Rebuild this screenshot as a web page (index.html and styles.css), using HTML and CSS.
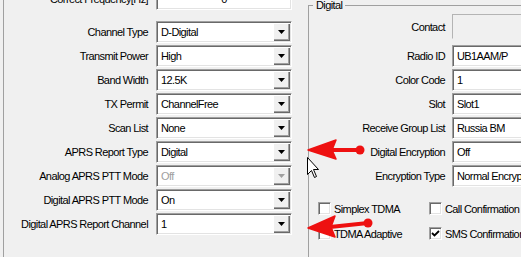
FILE: index.html
```html
<!DOCTYPE html>
<html lang="en">

<head>
  <meta charset="UTF-8" />
  <title>Channel - Digital</title>
  <link rel="stylesheet" href="styles.css">
</head>

<body>
  <div class="form">
    <section class="channel">
      <div class="row freq">
        <label>Correct Frequency[Hz]</label>
        <div class="field center">0</div>
      </div>

      <div class="rows">
        <div class="row"><label>Channel Type</label>
          <div class="combo"><span class="value">D-Digital</span><span class="drop"></span></div>
        </div>
        <div class="row"><label>Transmit Power</label>
          <div class="combo"><span class="value">High</span><span class="drop"></span></div>
        </div>
        <div class="row"><label>Band Width</label>
          <div class="combo"><span class="value">12.5K</span><span class="drop"></span></div>
        </div>
        <div class="row"><label>TX Permit</label>
          <div class="combo"><span class="value">ChannelFree</span><span class="drop"></span></div>
        </div>
        <div class="row"><label>Scan List</label>
          <div class="combo"><span class="value">None</span><span class="drop"></span></div>
        </div>
        <div class="row"><label>APRS Report Type</label>
          <div class="combo"><span class="value">Digital</span><span class="drop"></span></div>
        </div>
        <div class="row"><label>Analog APRS PTT Mode</label>
          <div class="combo disabled"><span class="value">Off</span><span class="drop"></span></div>
        </div>
        <div class="row"><label>Digital APRS PTT Mode</label>
          <div class="combo"><span class="value">On</span><span class="drop"></span></div>
        </div>
        <div class="row"><label>Digital APRS Report Channel</label>
          <div class="combo"><span class="value">1</span><span class="drop"></span></div>
        </div>
      </div>
    </section>

    <fieldset class="digital">
      <legend>Digital</legend>

      <div class="drows">
        <div class="drow contact"><label>Contact</label>
          <div class="field off"></div>
        </div>
        <div class="drow first"><label>Radio ID</label>
          <div class="field">UB1AAM/P</div>
        </div>
        <div class="drow"><label>Color Code</label>
          <div class="field">1</div>
        </div>
        <div class="drow"><label>Slot</label>
          <div class="field">Slot1</div>
        </div>
        <div class="drow"><label>Receive Group List</label>
          <div class="field">Russia BM</div>
        </div>
        <div class="drow"><label>Digital Encryption</label>
          <div class="field">Off</div>
        </div>
        <div class="drow"><label>Encryption Type</label>
          <div class="field">Normal Encryption</div>
        </div>
      </div>

      <div class="checks">
        <div class="check"><span class="box"></span>Simplex TDMA</div>
        <div class="check"><span class="box"></span>Call Confirmation</div>
        <div class="check"><span class="box"></span>TDMA Adaptive</div>
        <div class="check"><span class="box">
            <svg width="9" height="9" viewBox="0 0 9 9"><path d="M1 4 L3.5 6.5 L8 2" fill="none" stroke="#000" stroke-width="1.8" /></svg>
          </span>SMS Confirmation</div>
      </div>
    </fieldset>
  </div>

  <!-- red marks and mouse pointer drawn over the form -->
  <svg class="marks" width="521" height="257" viewBox="0 0 521 257">
    <g fill="#ee1111" stroke="#ee1111">
      <line x1="330" y1="150" x2="360" y2="150" stroke-width="4" stroke-linecap="round" />
      <circle cx="360" cy="150" r="4.5" stroke="none" />
      <path d="M308 150 L336 140 L332 150 L336 159 Z" stroke-width="1.5" stroke-linejoin="round" />

      <line x1="330" y1="227" x2="368" y2="223" stroke-width="4" stroke-linecap="round" />
      <circle cx="368" cy="223" r="4.5" stroke="none" />
      <path d="M308 228 L335 216 L331 227 L335 237 Z" stroke-width="1.5" stroke-linejoin="round" />
    </g>
    <path d="M307.5 157.5 L307.5 174.5 L311.5 170.5 L314.5 177.5 L316.5 176.5 L313.5 169.5 L318.5 169.5 Z" fill="#fff" stroke="#000" stroke-width="1" />
  </svg>
</body>

</html>
```

FILE: styles.css
```css
* {
  box-sizing: border-box;
}

body {
  margin: 0;
  width: 521px;
  height: 257px;
  overflow: hidden;
  position: relative;
  background: #f0f0f0;
  color: #000;
  font-family: 'Liberation Sans', Arial, sans-serif;
  font-size: 11px;
  letter-spacing: -0.6px;
}

.form {
  display: flex;
  align-items: flex-start;
}

/* left group */
.channel {
  flex: none;
  width: 305px;
  height: 300px;
  margin-left: 3px;
  border-left: 1px solid #a0a0a0;
}

.row {
  display: grid;
  grid-template-columns: 144px 136px;
  column-gap: 8px;
  align-items: center;
  height: 22px;
}

.row label,
.drow label {
  text-align: right;
  white-space: nowrap;
}

.freq {
  margin-top: -12px;
}

.rows {
  display: flex;
  flex-direction: column;
  gap: 2px;
  margin-top: 11px;
}

.field,
.combo {
  height: 22px;
  background: #fff;
  border: 1px solid;
  border-color: #a0a0a0 #fff #fff #a0a0a0;
  box-shadow: inset 1px 1px #696969, inset -1px -1px #e3e3e3;
  display: flex;
  align-items: center;
  padding: 1px 1px 1px 4px;
  white-space: nowrap;
  overflow: hidden;
}

.field.center {
  justify-content: center;
  padding-left: 1px;
}

.combo .value {
  flex: 1;
}

.combo .drop {
  width: 17px;
  height: 18px;
  background: #f0f0f0;
  box-shadow: inset 1px 1px #fff, inset -1px -1px #696969, inset -2px -2px #a0a0a0;
  display: flex;
  align-items: center;
  justify-content: center;
}

.combo .drop::after {
  content: '';
  width: 7px;
  height: 4px;
  background: #000;
  clip-path: polygon(0 0, 100% 0, 50% 100%);
}

.combo.disabled .value {
  color: #a0a0a0;
}

.combo.disabled .drop::after {
  background: #a0a0a0;
}

/* right group */
.digital {
  flex: none;
  margin: 0;
  padding: 0;
  width: 260px;
  height: 300px;
  min-width: 0;
  border: 1px solid #a0a0a0;
}

.digital legend {
  margin-left: 4px;
  padding: 0 3px;
  line-height: 11px;
}

.drows {
  display: flex;
  flex-direction: column;
  gap: 2px;
}

.drow {
  display: grid;
  grid-template-columns: 136px 136px;
  column-gap: 7px;
  align-items: center;
  height: 22px;
}

.drow.contact {
  height: 25px;
  margin-top: 3px;
}

.drow.contact .field {
  height: 25px;
}

.drow.first {
  margin-top: 4px;
}

.field.off {
  background: #f0f0f0;
  border-color: #b4b4b4 #f0f0f0 #f0f0f0 #b4b4b4;
  box-shadow: none;
}

.checks {
  display: grid;
  grid-template-columns: 111px 130px;
  row-gap: 12px;
  padding-left: 9px;
  margin-top: 15px;
}

.check {
  display: flex;
  align-items: center;
  gap: 3px;
  height: 13px;
  white-space: nowrap;
}

.check .box {
  width: 13px;
  height: 13px;
  flex: none;
  background: #fff;
  border: 1px solid;
  border-color: #a0a0a0 #fff #fff #a0a0a0;
  box-shadow: inset 1px 1px #696969, inset -1px -1px #e3e3e3;
  display: flex;
  align-items: center;
  justify-content: center;
}

.marks {
  position: absolute;
  top: 0;
  left: 0;
  pointer-events: none;
}
```
